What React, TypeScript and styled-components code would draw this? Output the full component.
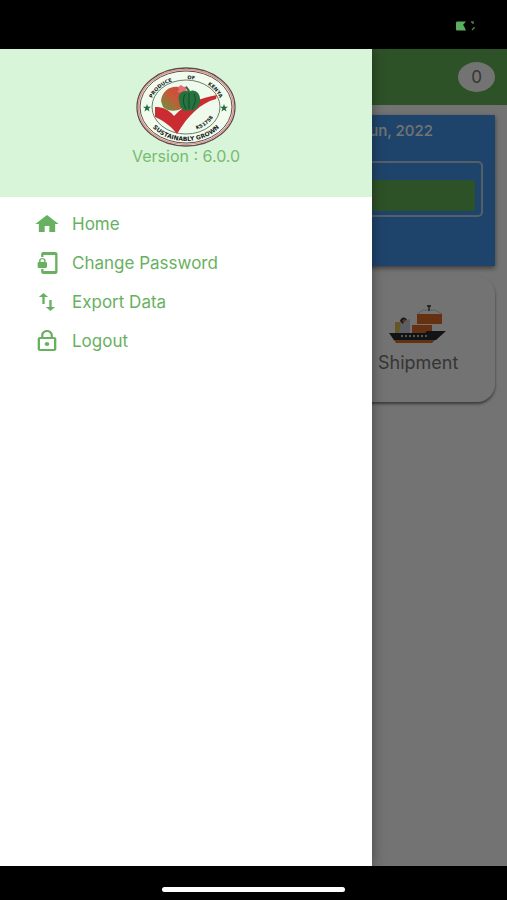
import React from "react";
import styled, { createGlobalStyle } from "styled-components";

const GlobalStyle = createGlobalStyle`
  *, *::before, *::after { box-sizing: border-box; }
  body {
    margin: 0;
    background: #000;
    font-family: Inter, "Liberation Sans", sans-serif;
  }
`;

const accent = "#67b160";

const Screen = styled.div`
  display: flex;
  flex-direction: column;
  min-height: 100vh;
  background: #000;
`;

const StatusBar = styled.div`
  display: flex;
  align-items: center;
  justify-content: flex-end;
  height: 49px;
  padding: 3px 32px 0 0;
`;

const Stage = styled.div`
  position: relative;
  display: flex;
  flex: 1;
  flex-direction: column;
  overflow: hidden;
  background: #fff;
`;

const AppBar = styled.header`
  display: flex;
  align-items: center;
  justify-content: flex-end;
  height: 56px;
  padding: 0 12px;
  background: #66b558;
`;

const CountBadge = styled.span`
  display: grid;
  place-items: center;
  width: 37px;
  height: 30px;
  border-radius: 50%;
  background: #fff;
  color: #777;
  font-size: 17px;
`;

const Dashboard = styled.main`
  display: flex;
  flex-direction: column;
  gap: 10px;
  padding: 10px 12px;
`;

const SummaryCard = styled.section`
  display: flex;
  flex-direction: column;
  gap: 20px;
  height: 151px;
  padding: 5px 12px;
  background: #4598ee;
  box-shadow: 0 2px 5px rgba(0, 0, 0, 0.5);
`;

const DateLine = styled.div`
  padding-right: 50px;
  color: #fff;
  font-size: 15px;
  font-weight: 500;
  line-height: 21px;
  text-align: right;
`;

const SearchFrame = styled.div`
  height: 56px;
  padding: 17px 6px 4px;
  border: 2px solid #bcd2ea;
  border-radius: 5px;
`;

const SearchButton = styled.button`
  display: block;
  width: 100%;
  height: 31px;
  border: 0;
  border-radius: 3px;
  background: #66b558;
`;

const Tiles = styled.div`
  display: grid;
  grid-template-columns: repeat(3, 1fr);
  gap: 11px;
`;

const Tile = styled.button`
  display: flex;
  flex-direction: column;
  grid-column: 3;
  align-items: center;
  gap: 7px;
  height: 126px;
  padding: 29px 0 0;
  border: 0;
  border-radius: 18px;
  background: #fff;
  box-shadow: 0 2px 3px rgba(0, 0, 0, 0.5);
  color: #777;
  font-family: inherit;
  font-size: 18px;
  line-height: 22px;
`;

const Scrim = styled.div`
  position: absolute;
  inset: 0;
  background: rgba(0, 0, 0, 0.55);
`;

const Drawer = styled.aside`
  position: absolute;
  inset: 0 auto 0 0;
  width: 73.4%;
  background: #fff;
  box-shadow: 0 0 12px rgba(0, 0, 0, 0.4);
  color: ${accent};
`;

const DrawerHeader = styled.div`
  display: flex;
  flex-direction: column;
  align-items: center;
  height: 148px;
  padding-top: 18px;
  background: #d9f5d9;
`;

const Version = styled.div`
  font-size: 16px;
  line-height: 18px;
  opacity: 0.85;
`;

const Menu = styled.nav`
  display: flex;
  flex-direction: column;
  padding: 7px 0 0 33px;
`;

const MenuItem = styled.a`
  display: flex;
  align-items: center;
  gap: 11px;
  height: 39px;
  color: inherit;
  font-size: 17px;
  text-decoration: none;
`;

const HomeBar = styled.footer`
  display: flex;
  justify-content: center;
  height: 34px;
  padding-top: 21px;

  &::before {
    width: 36%;
    height: 5px;
    border-radius: 3px;
    background: #fff;
    content: "";
  }
`;

const entries = [
  { label: "Home", path: "M10 20v-6h4v6h5v-8h3L12 3 2 12h3v8z" },
  {
    label: "Change Password",
    path: "M19 1H9c-1.1 0-2 .9-2 2v3h2V4h10v16H9v-2H7v3c0 1.1.9 2 2 2h10c1.1 0 2-.9 2-2V3c0-1.1-.9-2-2-2zm-8.2 10V9.5C10.8 8.1 9.4 7 8 7S5.2 8.1 5.2 9.5V11c-.6 0-1.2.6-1.2 1.2v3.5c0 .7.6 1.3 1.2 1.3h5.5c.7 0 1.3-.6 1.3-1.2v-3.5c0-.7-.6-1.3-1.2-1.3zm-1.3 0h-3V9.5c0-.8.7-1.3 1.5-1.3s1.5.5 1.5 1.3V11z",
  },
  {
    label: "Export Data",
    path: "M9 3L5 6.99h3V14h2V6.99h3L9 3zm7 14.01V10h-2v7.01h-3L15 21l4-3.99h-3z",
  },
  {
    label: "Logout",
    path: "M12 17c1.1 0 2-.9 2-2s-.9-2-2-2-2 .9-2 2 .9 2 2 2zm6-9h-1V6c0-2.76-2.24-5-5-5S7 3.24 7 6v2H6c-1.1 0-2 .9-2 2v10c0 1.1.9 2 2 2h12c1.1 0 2-.9 2-2V10c0-1.1-.9-2-2-2zM8.9 6c0-1.71 1.39-3.1 3.1-3.1s3.1 1.39 3.1 3.1v2H8.9V6zM18 20H6V10h12v10z",
  },
];

const star = "M0-4 1-1.2 4-1.2 1.6.6 2.5 3.5 0 1.7-2.5 3.5-1.6.6-4-1.2-1-1.2Z";

function Seal() {
  return (
    <svg width="100" height="80" viewBox="0 0 100 80" role="img" aria-label="Produce of Kenya">
      <defs>
        <path id="arcTop" d="M14 41A36 29 0 0 1 86 41" />
        <path id="arcBottom" d="M8 40A42 34 0 0 0 92 40" />
        <path id="arcCode" d="M50 64A30 24 0 0 0 80 40" />
        <linearGradient id="mango" x1="1" y1="0" x2="0" y2="1">
          <stop offset="0" stopColor="#da403b" />
          <stop offset="0.5" stopColor="#c45a38" />
          <stop offset="1" stopColor="#5d9a3c" />
        </linearGradient>
      </defs>
      <ellipse cx="50" cy="40" rx="49" ry="39" fill="#f1fbee" stroke="#5a4a48" strokeWidth="1.3" />
      <ellipse cx="50" cy="40" rx="47.500" ry="37.500" fill="none" stroke="#d9968f" strokeWidth="1.5" />
      <ellipse cx="50" cy="40" rx="46" ry="36" fill="none" stroke="#5f504d" strokeWidth="1" />
      <ellipse cx="50" cy="40" rx="34" ry="27" fill="#eefaec" stroke="#4b5d4c" strokeWidth="0.8" />
      <path d="M19 40C27 40 32 42 38 49 50 36 65 31 81 28L80 32C65 36 52 48 41 67 36 60 28 54 19 50Z" fill="#ca2c31" />
      <g fill="#17211b" fontFamily="DejaVu Sans, sans-serif" fontWeight="700" textAnchor="middle">
        <text fontSize="5"><textPath href="#arcTop" startOffset="23%">PRODUCE</textPath></text>
        <text fontSize="5"><textPath href="#arcTop" startOffset="55%">OF</textPath></text>
        <text fontSize="5"><textPath href="#arcTop" startOffset="81%">KENYA</textPath></text>
        <text fontSize="6"><textPath href="#arcBottom" startOffset="50%">SUSTAINABLY GROWN</textPath></text>
        <text fontSize="5"><textPath href="#arcCode" startOffset="50%">KS1758</textPath></text>
      </g>
      <path d={star} transform="translate(11 41)" fill="#1f6d3b" />
      <path d={star} transform="translate(88 41)" fill="#1f6d3b" />
      <path d="M25 34C26 24 34 19 42 20 50 20 53 29 50 36 46 46 32 45 27 40Z" fill="url(#mango)" />
      <path d="M42 20l3-2 3 2 3-1-1 4 3 2-4 2-2 2-2-3-4-1 2-2Z" fill="#e56f72" />
      <path d="M43 34C41 25 48 22 53 25 57 21 65 25 64 34 63 41 58 45 54 43 48 46 44 42 43 34Z" fill="#267340" />
      <path d="M49 27C46 33 48 39 50 42M53 26V42M58 27C61 33 58 38 56 42" fill="none" stroke="#104d29" />
      <path d="M53 26C53 22 51 21 50 20" fill="none" stroke="#286c38" strokeWidth="2" />
    </svg>
  );
}

function Ship() {
  return (
    <svg width="58" height="40" viewBox="0 0 58 40" aria-hidden="true">
      <path d="M6 17h6v11H6z" fill="#e7bd55" />
      <path d="M12 17l9-3v14H10z" fill="#cdd1dc" />
      <path d="M11 16c1-4 5-5 7-1l-3 1-1 3Z" fill="#36302f" />
      <path d="M13 15l3-1 1 2-3 1Z" fill="#df7434" />
      <path d="M28 9l6-4h12l7 4" fill="none" stroke="#cbd0d2" />
      <path d="M38 1h4M40 1v5" fill="none" stroke="#333" strokeWidth="1.3" />
      <path d="M28 9h25v10H28zM23 20h20v8H23z" fill="#df6d26" />
      <path d="M3 32h46l-6 6H7z" fill="#d9712c" />
      <path d="M0 28h36l2-2h19L47 35H5z" fill="#292c34" />
      <path d="M12 31h28" stroke="#bbb" strokeWidth="2" strokeDasharray="2 2" />
    </svg>
  );
}

export default function App() {
  return (
    <>
      <GlobalStyle />
      <Screen>
        <StatusBar>
          <svg width="19" height="10" viewBox="0 0 19 10" aria-hidden="true">
            <path d="M1 .5h9L7 4 8 5 10 9.500H1Q0 9.500 0 8V2Q0 .5 1 .5Z" fill="#5aae60" />
            <path d="M15 1h2v2M18 6v1l-2 2" fill="none" stroke="#548058" strokeWidth="1.4" />
          </svg>
        </StatusBar>
        <Stage>
          <AppBar>
            <CountBadge>0</CountBadge>
          </AppBar>
          <Dashboard>
            <SummaryCard>
              <DateLine>Jun, 2022</DateLine>
              <SearchFrame>
                <SearchButton type="button" aria-label="Open" />
              </SearchFrame>
            </SummaryCard>
            <Tiles>
              <Tile type="button">
                <Ship />
                Shipment
              </Tile>
            </Tiles>
          </Dashboard>
          <Scrim />
          <Drawer>
            <DrawerHeader>
              <Seal />
              <Version>Version : 6.0.0</Version>
            </DrawerHeader>
            <Menu>
              {entries.map(({ label, path }) => (
                <MenuItem key={label} href="#">
                  <svg width="28" height="24" viewBox="0 0 24 24" preserveAspectRatio="none" fill="currentColor" aria-hidden="true">
                    <path d={path} />
                  </svg>
                  {label}
                </MenuItem>
              ))}
            </Menu>
          </Drawer>
        </Stage>
        <HomeBar />
      </Screen>
    </>
  );
}
